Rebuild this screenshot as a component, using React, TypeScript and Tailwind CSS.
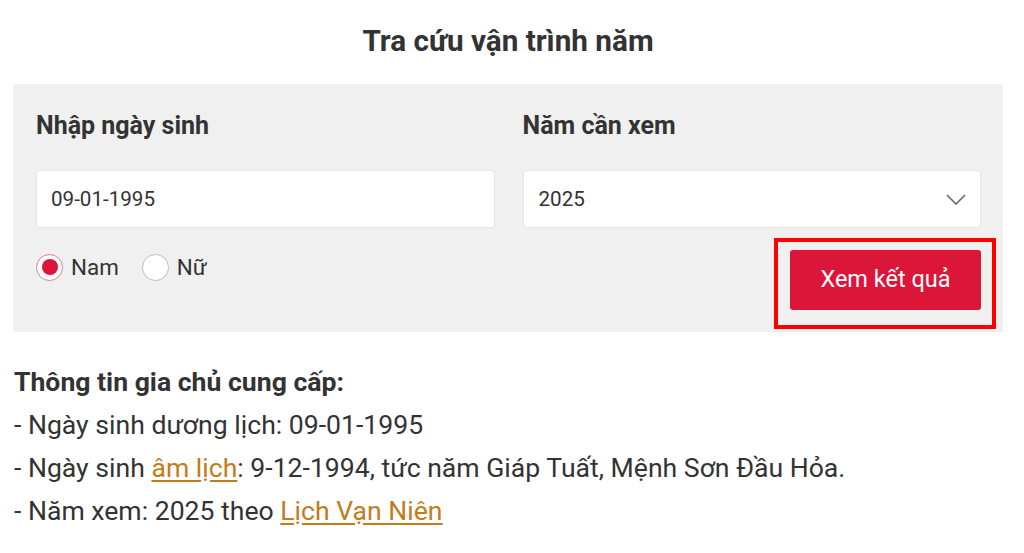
import { useState } from 'react';

export default function App() {
    const [gender, setGender] = useState<'nam' | 'nu'>('nam');
    const [birth, setBirth] = useState('09-01-1995');
    const [year, setYear] = useState('2025');

    return (
        <div className="min-h-screen bg-white text-[#333] font-['Roboto',sans-serif]">
            <div className="ml-[13px] w-[990px] pt-[20px]">
                <h1 className="text-center text-[29.7px] font-bold leading-[42px] mb-[22px]">
                    Tra cứu vận trình năm
                </h1>

                {/* Form panel */}
                <div className="bg-[#f0f0f0] pt-[27px] pb-[22px] pl-[23px] pr-[22px] grid grid-cols-2 gap-x-[28px]">
                    <div>
                        <label className="block text-[25px] font-bold leading-[30px] mb-[29px]">Nhập ngày sinh</label>
                        <input
                            value={birth}
                            onChange={(e) => setBirth(e.target.value)}
                            className="w-full h-[58px] bg-white border border-[#e6e6e6] rounded-[3px] px-[14px] text-[20.6px] text-[#333] outline-none"
                        />
                        <div className="flex items-center mt-[25px]">
                            <label className="flex items-center cursor-pointer" onClick={() => setGender('nam')}>
                                <span className={`w-[27px] h-[27px] rounded-full border-[1.5px] flex items-center justify-center bg-white ${gender === 'nam' ? 'border-[#e57a8c]' : 'border-[#bdbdbd]'}`}>
                                    {gender === 'nam' && <span className="w-[16px] h-[16px] rounded-full bg-[#dc143c]"></span>}
                                </span>
                                <span className="ml-[8px] text-[22.4px] leading-[28px]">Nam</span>
                            </label>
                            <label className="flex items-center cursor-pointer ml-[23px]" onClick={() => setGender('nu')}>
                                <span className={`w-[27px] h-[27px] rounded-full border-[1.5px] flex items-center justify-center bg-white ${gender === 'nu' ? 'border-[#e57a8c]' : 'border-[#bdbdbd]'}`}>
                                    {gender === 'nu' && <span className="w-[16px] h-[16px] rounded-full bg-[#dc143c]"></span>}
                                </span>
                                <span className="ml-[8px] text-[22.4px] leading-[28px]">Nữ</span>
                            </label>
                        </div>
                    </div>

                    <div>
                        <label className="block text-[25px] font-bold leading-[30px] mb-[29px]">Năm cần xem</label>
                        <div className="relative">
                            <select
                                value={year}
                                onChange={(e) => setYear(e.target.value)}
                                className="appearance-none w-full h-[58px] bg-white border border-[#e6e6e6] rounded-[3px] pl-[15px] text-[20.6px] text-[#333] outline-none"
                            >
                                <option value="2024">2024</option>
                                <option value="2025">2025</option>
                                <option value="2026">2026</option>
                            </select>
                            <svg className="absolute right-[15px] top-[24px] pointer-events-none" width="20" height="11" viewBox="0 0 20 11" fill="none">
                                <path d="M1 1l9 9 9-9" stroke="#666" strokeWidth="1.6" />
                            </svg>
                        </div>
                        <div className="flex justify-end mt-[22px]">
                            <div className="relative">
                                <button className="w-[191px] h-[60px] bg-[#dc1639] rounded-[3px] text-white text-[23.5px]">
                                    Xem kết quả
                                </button>
                                {/* annotation frame */}
                                <span className="absolute -left-[16px] -top-[12px] -right-[15px] -bottom-[19px] border-4 border-[#ff0000] pointer-events-none"></span>
                            </div>
                        </div>
                    </div>
                </div>

                {/* Result info */}
                <div className="mt-[28px] pl-[1px] text-[26.6px] leading-[43px]">
                    <p className="font-bold">Thông tin gia chủ cung cấp:</p>
                    <p>- Ngày sinh dương lịch: 09-01-1995</p>
                    <p>
                        - Ngày sinh <a href="#" className="text-[#c47b1c] underline underline-offset-[3px]">âm lịch</a>: 9-12-1994, tức năm Giáp Tuất, Mệnh Sơn Đầu Hỏa.
                    </p>
                    <p>
                        - Năm xem: 2025 theo <a href="#" className="text-[#c47b1c] underline underline-offset-[3px]">Lịch Vạn Niên</a>
                    </p>
                </div>
            </div>
        </div>
    );
}
